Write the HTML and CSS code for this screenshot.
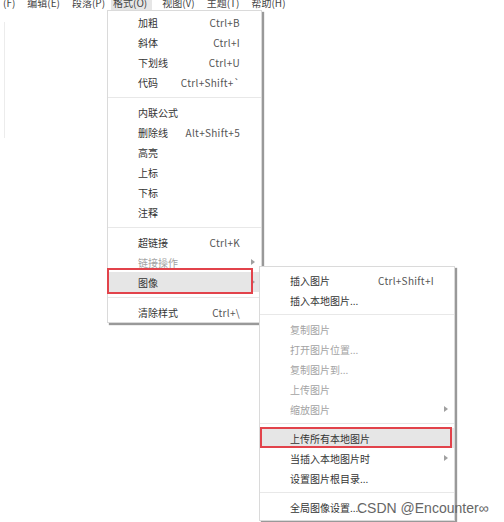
FILE: index.html
```html
<!DOCTYPE html>
<html lang="zh-CN">
<head>
  <meta charset="UTF-8">
  <title>格式菜单</title>
  <link rel="stylesheet" href="styles.css">
</head>
<body>
  <div class="menubar">
    <span class="mb-item first">(F)</span>
    <span class="mb-item">编辑(E)</span>
    <span class="mb-item">段落(P)</span>
    <span class="mb-item active">格式(O)</span>
    <span class="mb-item">视图(V)</span>
    <span class="mb-item">主题(T)</span>
    <span class="mb-item">帮助(H)</span>
  </div>
  <div class="doc"></div>

  <div class="menu format-menu">
    <div class="item"><span>加粗</span><span class="key">Ctrl+B</span></div>
    <div class="item"><span>斜体</span><span class="key">Ctrl+I</span></div>
    <div class="item"><span>下划线</span><span class="key">Ctrl+U</span></div>
    <div class="item"><span>代码</span><span class="key">Ctrl+Shift+`</span></div>
    <div class="sep"></div>
    <div class="item"><span>内联公式</span></div>
    <div class="item"><span>删除线</span><span class="key">Alt+Shift+5</span></div>
    <div class="item"><span>高亮</span></div>
    <div class="item"><span>上标</span></div>
    <div class="item"><span>下标</span></div>
    <div class="item"><span>注释</span></div>
    <div class="sep"></div>
    <div class="item"><span>超链接</span><span class="key">Ctrl+K</span></div>
    <div class="item disabled has-sub"><span>链接操作</span><i class="arrow"></i></div>
    <div class="item active has-sub"><span>图像</span><i class="arrow"></i><b class="mark mark-image"></b></div>
    <div class="sep"></div>
    <div class="item"><span>清除样式</span><span class="key">Ctrl+\</span></div>
  </div>

  <div class="menu image-menu">
    <div class="item"><span>插入图片</span><span class="key">Ctrl+Shift+I</span></div>
    <div class="item"><span>插入本地图片...</span></div>
    <div class="sep"></div>
    <div class="item disabled"><span>复制图片</span></div>
    <div class="item disabled"><span>打开图片位置...</span></div>
    <div class="item disabled"><span>复制图片到...</span></div>
    <div class="item disabled"><span>上传图片</span></div>
    <div class="item disabled has-sub"><span>缩放图片</span><i class="arrow"></i></div>
    <div class="sep"></div>
    <div class="item active"><span>上传所有本地图片</span><b class="mark mark-upload"></b></div>
    <div class="item has-sub"><span>当插入本地图片时</span><i class="arrow"></i></div>
    <div class="item"><span>设置图片根目录...</span></div>
    <div class="sep"></div>
    <div class="item"><span>全局图像设置...</span></div>
  </div>

  <div class="watermark">CSDN @Encounter∞</div>
</body>
</html>
```

FILE: styles.css
```css
body {
  margin: 0;
  position: relative;
  width: 504px;
  height: 522px;
  overflow: hidden;
  background: #fff;
  font-family: "Noto Sans CJK SC", sans-serif;
  font-size: 10px;
  color: #333;
}
.menubar {
  display: flex;
  align-items: flex-end;
  height: 10px;
  overflow: hidden;
  color: #444;
}
.mb-item {
  line-height: 15px;
  padding: 0 6px;
}
.mb-item.first {
  padding-left: 3px;
}
.mb-item.active {
  background: #e6e6e6;
  padding: 0 5px 0 2px;
  margin-right: 4px;
}
.doc {
  margin: 12px 0 0 4px;
  height: 116px;
  border-left: 1px solid #ececec;
}
.menu {
  position: absolute;
  box-sizing: border-box;
  background: #fff;
  border: 1px solid #dadada;
  box-shadow: 2px 2px 1px rgba(0,0,0,0.4);
}
.format-menu {
  left: 107px;
  top: 10px;
  width: 155px;
  padding-top: 1px;
}
.image-menu {
  left: 259px;
  top: 266px;
  width: 196px;
  padding: 3px 0;
}
.item {
  position: relative;
  display: flex;
  justify-content: space-between;
  align-items: center;
  height: 20px;
  padding: 0 21px 0 30px;
  white-space: nowrap;
}
.image-menu .item {
  padding-right: 20px;
}
.key {
  color: #555;
  letter-spacing: 0.3px;
}
.disabled {
  color: #a3a3a3;
}
.item.active {
  background: #e6e6e6;
}
.sep {
  height: 1px;
  margin: 5px 0 4px;
  background: #e8e8e8;
}
.image-menu .sep {
  margin: 4px 0;
}
.arrow {
  position: absolute;
  right: 6px;
  top: 7px;
  width: 0;
  height: 0;
  border-top: 3px solid transparent;
  border-bottom: 3px solid transparent;
  border-left: 4px solid #a0a0a0;
}
.mark {
  position: absolute;
  border: 2px solid #e2434b;
}
.mark-image {
  left: -1px;
  right: 8px;
  top: -4px;
  bottom: -2px;
}
.mark-upload {
  left: 0;
  right: 2px;
  top: -1px;
  bottom: 0;
}
.watermark {
  position: absolute;
  left: 357px;
  top: 500px;
  font-family: "Liberation Sans", sans-serif;
  font-size: 14px;
  line-height: 16px;
  color: #666;
}
```
